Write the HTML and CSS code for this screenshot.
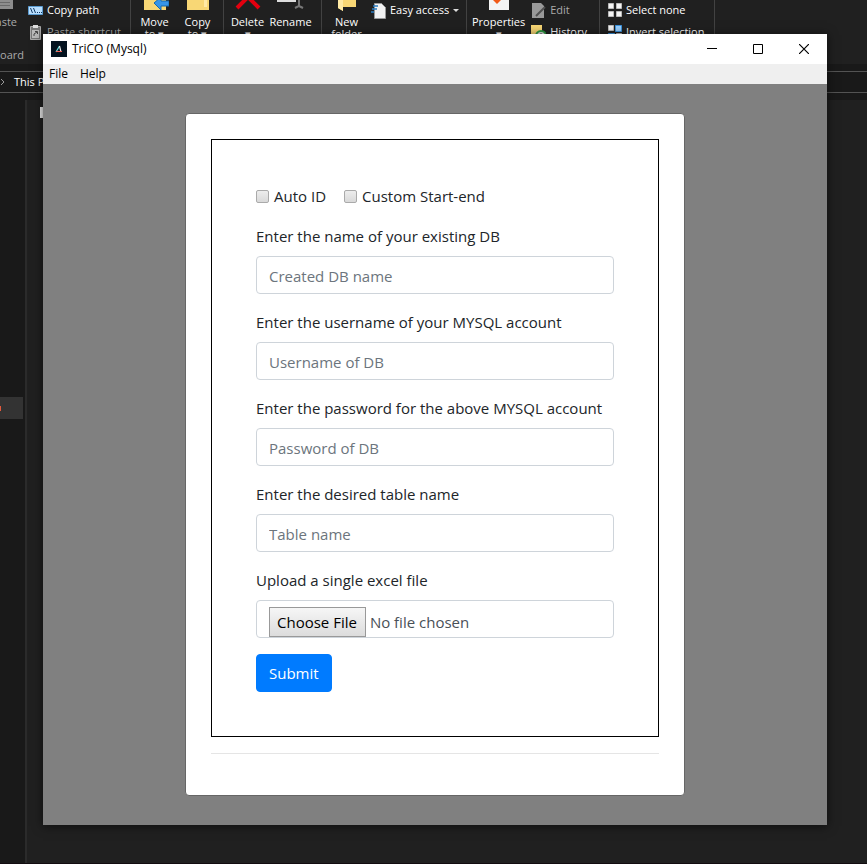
FILE: index.html
```html
<!DOCTYPE html>
<html lang="en">
<head>
<meta charset="utf-8">
<meta name="viewport" content="width=device-width, initial-scale=1">
<title>TriCO (Mysql)</title>
<link rel="stylesheet" href="styles.css">
</head>
<body>
<div class="desktop">
  <div class="explorer">
    <div class="ribbon">
      <div class="group group-clipboard">
        <div class="paste">
          <svg width="24" height="12" viewBox="0 0 24 12"><path fill="#8d8d8d" d="M0 0h20v9H0z"/><path stroke="#696969" d="M0 2.5h17M0 5.5h17"/></svg>
          <span>Paste</span>
          <span class="group-name">Clipboard</span>
        </div>
        <div class="stack">
          <div class="row"><svg width="15" height="15" viewBox="0 0 15 15"><path fill="#b9dfff" stroke="#5a9bd0" d="M.5 3.500h14v8H.5z"/><path stroke="#123a63" d="M2.500 5l2 5M5.500 5l2 5" fill="none"/><path fill="#123a63" d="M9 9h1v1H9zM11 9h1v1h-1zM13 9h1v1h-1z"/></svg>Copy path</div>
          <div class="row dim"><svg width="15" height="15" viewBox="0 0 15 15"><path fill="#777" stroke="#aaa" d="M2.500 1.500h10v13h-10z"/><path fill="#ddd" d="M5 0h5v3H5z"/><path fill="#bbb" d="M4 5h7v8H4z"/><path stroke="#444" fill="none" d="M6 11V9l3-2M7 6.500h2.500V9"/></svg>Paste shortcut</div>
        </div>
      </div>
      <div class="group group-move">
        <div class="tool"><svg width="28" height="12" viewBox="0 0 28 12"><path fill="#f8d775" d="M3 0h22v10H3z"/><path fill="#3795e8" stroke="#1768ad" d="M13 3l7-6v4h8v5h-8v4z"/></svg><span>Move</span><span>to ▾</span></div>
        <div class="tool"><svg width="28" height="12" viewBox="0 0 28 12"><path fill="#f8d775" d="M3 0h22v10H3z"/><path fill="#ffe9a6" d="M20 0h3v7h-3z"/></svg><span>Copy</span><span>to ▾</span></div>
      </div>
      <div class="group group-delete">
        <div class="tool"><svg width="28" height="12" viewBox="0 0 28 12"><path d="M3 8L14-3 25 8M14-3L3-14" fill="none" stroke="#e3000f" stroke-width="4"/></svg><span>Delete</span><span>▾</span></div>
        <div class="tool"><svg width="36" height="12" viewBox="0 0 36 12"><path fill="#ddd" d="M4 0h19v2H4z"/><path d="M26 0v6l-4 2M26 6l4 2" fill="none" stroke="#777" stroke-width="2"/></svg><span>Rename</span></div>
      </div>
      <div class="group group-new">
        <div class="tool"><svg width="28" height="12" viewBox="0 0 28 12"><path fill="#f8d775" d="M5 0h18v7H10l0 4-5-3z"/><path fill="#ffeaa5" d="M5 0h5v11L5 8z"/></svg><span>New</span><span>folder</span></div>
        <div class="stack">
          <div class="row"><svg width="15" height="17" viewBox="0 0 15 17"><path fill="#f2f2f2" stroke="#999" d="M3.500 1.500h7l4 4v11h-11z"/><path fill="none" stroke="#287cc1" stroke-width="1.500" d="M2 4h5M1 7h5M0 10h3"/></svg>Easy access<i class="caret"></i></div>
        </div>
      </div>
      <div class="group group-open">
        <div class="tool"><svg width="28" height="12" viewBox="0 0 28 12"><path fill="#f4f4f4" d="M4 0h20v10H4z"/><path fill="#f25a18" d="M8 0h8l-4 4z"/></svg><span>Properties</span><span>▾</span></div>
        <div class="stack">
          <div class="row dim"><svg width="15" height="17" viewBox="0 0 15 17"><path fill="#999" d="M1 1h9l3 3v12H1z"/><path stroke="#505050" stroke-width="2" d="M5 14L14 5"/></svg>Edit</div>
          <div class="row"><svg width="15" height="17" viewBox="0 0 15 17"><path fill="#f8d775" d="M0 1h11v14H0z"/><circle cx="10" cy="12" r="5" fill="#ddd" stroke="#2c9b42" stroke-width="2"/><path fill="none" stroke="#555" d="M10 9v3h3"/></svg>History</div>
        </div>
      </div>
      <div class="group group-select">
        <div class="stack">
          <div class="row"><svg width="14" height="14" viewBox="0 0 14 14"><path fill="#f4f4f4" stroke="#bbb" d="M.5.5h5v5h-5zM8.500.5h5v5h-5zM.5 8.500h5v5h-5zM8.500 8.500h5v5h-5z"/></svg>Select none</div>
          <div class="row"><svg width="14" height="14" viewBox="0 0 14 14"><path fill="#f4f4f4" stroke="#bbb" d="M.5.5h5v5h-5zM8.500 8.500h5v5h-5z"/><path fill="#9bd0ff" stroke="#3a93de" d="M7.500.5h6v6h-6zM.5 8.500h6v5h-6z"/></svg>Invert selection</div>
        </div>
      </div>
    </div>
    <div class="address"><svg width="6" height="10" viewBox="0 0 6 10"><path d="M1 2l3 3-3 3" fill="none" stroke="#999"/></svg>This PC</div>
    <div class="panes">
      <div class="tree"><div class="tree-item"><i></i></div></div>
      <div class="files"><i class="heading-mark"></i></div>
    </div>
  </div>

  <main class="window">
    <header class="titlebar">
      <svg class="logo" width="16" height="16" viewBox="0 0 16 16"><path fill="#03121f" d="M0 0h16v16H0z"/><path d="M5 11l3.500-6" stroke="#67e1df" stroke-width="1.200"/><path d="M8.500 5L10 11" stroke="#f1f1f1" stroke-width="1.200"/><path d="M5 10.500h6" stroke="#ef6258"/></svg>
      <span class="title">TriCO (Mysql)</span>
      <button class="control" aria-label="Minimize"><svg width="10" height="10" viewBox="0 0 10 10"><path d="M0 4.500h10" stroke="#000"/></svg></button>
      <button class="control" aria-label="Maximize"><svg width="10" height="10" viewBox="0 0 10 10"><path d="M.5.5h9v9h-9z" fill="none" stroke="#000"/></svg></button>
      <button class="control" aria-label="Close"><svg width="10" height="10" viewBox="0 0 10 10"><path d="M0 0l10 10M10 0L0 10" stroke="#000" stroke-width="1.200"/></svg></button>
    </header>
    <nav class="menubar"><button>File</button><button>Help</button></nav>
    <div class="client">
      <section class="card">
        <form class="form">
          <div class="checks">
            <label><input type="checkbox">Auto ID</label>
            <label><input type="checkbox">Custom Start-end</label>
          </div>
          <div class="field"><label for="db">Enter the name of your existing DB</label><input class="text" id="db" type="text" placeholder="Created DB name"></div>
          <div class="field"><label for="user">Enter the username of your MYSQL account</label><input class="text" id="user" type="text" placeholder="Username of DB"></div>
          <div class="field"><label for="pass">Enter the password for the above MYSQL account</label><input class="text" id="pass" type="password" placeholder="Password of DB"></div>
          <div class="field"><label for="table">Enter the desired table name</label><input class="text" id="table" type="text" placeholder="Table name"></div>
          <div class="field"><label for="file">Upload a single excel file</label><input class="text upload" id="file" type="file"></div>
          <button class="submit" type="submit">Submit</button>
        </form>
        <hr>
      </section>
    </div>
  </main>
</div>
</body>
</html>
```
FILE: styles.css
```css
* { box-sizing: border-box; }

body {
  margin: 0;
  background: #202020;
  font-family: "Open Sans", "Noto Sans", sans-serif;
}

button, input { font-family: inherit; }

.desktop {
  display: grid;
  grid-template-columns: minmax(0, 1fr);
  min-height: 100vh;
}

.explorer, .window { grid-area: 1 / 1; }

/* File manager behind the application window */
.explorer {
  display: flex;
  flex-direction: column;
  overflow: hidden;
  color: #fff;
  font-size: 11px;
  line-height: 14px;
  white-space: nowrap;
  border-bottom: 1px solid #120c10;
}

.ribbon {
  display: flex;
  height: 65px;
  border-bottom: 1px solid #2b2b2b;
}

.group {
  display: flex;
  flex: none;
  border-right: 1px solid #424242;
}

.group-clipboard { width: 131px; gap: 4px; }
.group-move { width: 93px; padding-left: 2px; }
.group-delete { width: 98px; padding-left: 2px; }
.group-new { width: 145px; padding-left: 3px; gap: 3px; }
.group-open { width: 133px; padding-left: 5px; gap: 6px; }
.group-select { width: 115px; padding-left: 8px; }

.paste {
  display: flex;
  flex-direction: column;
  align-items: flex-end;
  width: 24px;
  padding-right: 7px;
  gap: 3px;
  color: #aaa;
}

.group-name { margin: 16px -7px 0 0; }

.tool {
  display: flex;
  flex-direction: column;
  align-items: center;
  min-width: 43px;
  line-height: 12px;
}

.tool svg { margin-bottom: 4px; }

.stack { padding-top: 1px; }

.row {
  display: flex;
  align-items: center;
  gap: 4px;
  height: 18px;
  margin-bottom: 4px;
}

.dim { color: #aaa; }

.caret {
  border: 3px solid transparent;
  border-top-color: #ddd;
  border-bottom: 0;
}

.address {
  display: flex;
  align-items: center;
  gap: 8px;
  height: 22px;
  margin-top: 6px;
  border: solid #535353;
  border-width: 1px 0;
  background: #191919;
  box-shadow: 0 0 0 7px #191919;
}

.panes {
  display: flex;
  flex: 1;
  margin-top: 7px;
}

.tree {
  width: 27px;
  padding-top: 297px;
  border-right: 2px solid #2b2b2b;
  background: #191919;
}

.tree-item {
  display: flex;
  align-items: center;
  width: 23px;
  height: 22px;
  background: #333;
}

.tree-item i { width: 1px; height: 5px; background: #e2593c; }

.files { flex: 1; padding: 7px 13px; background: #202020; }

.heading-mark { display: block; width: 3px; height: 11px; background: #eee; }

/* Application window */
.window {
  display: flex;
  flex-direction: column;
  margin: 34px 40px 39px 43px;
  background: #808080;
  box-shadow: 0 1px 10px rgba(0, 0, 0, .6);
}

.titlebar {
  display: flex;
  align-items: center;
  height: 30px;
  padding-bottom: 1px;
  background: #fff;
}

.logo { margin: 0 5px 0 8px; }

.title { flex: 1; font-size: 12px; }

.control {
  display: grid;
  place-items: center;
  width: 46px;
  height: 28px;
  padding: 0;
  border: 0;
  background: none;
}

.menubar {
  display: flex;
  height: 20px;
  background: #efefef;
}

.menubar button {
  padding: 0 6px;
  border: 0;
  background: none;
  font-size: 12px;
  line-height: 18px;
}

.client { flex: 1; padding: 29px 16px; }

.card {
  max-width: 500px;
  margin: 0 auto;
  padding: 25px;
  border: 1px solid #666;
  border-radius: 4px;
  background: #fff;
  color: #212529;
  font-size: 15px;
  line-height: 24px;
}

.form { padding: 44px; border: 1px solid #000; }

.checks { display: flex; gap: 18px; margin-bottom: 16px; }

.checks label { display: flex; align-items: center; gap: 5px; }

.checks input {
  width: 13px;
  height: 13px;
  margin: 0;
  appearance: none;
  border: 1px solid #aaa;
  border-radius: 2px;
  background: linear-gradient(#ededed, #d9d9d9);
}

.field { margin-bottom: 16px; }

.field label { display: block; margin-bottom: 8px; }

.text {
  display: block;
  width: 100%;
  height: 38px;
  padding: 8px 12px 6px;
  border: 1px solid #ced4da;
  border-radius: 4px;
  background: #fff;
  color: #495057;
  font-size: 15px;
  line-height: 24px;
  overflow: hidden;
}

.upload { padding: 6px 12px; }

.text::placeholder { color: #6c757d; opacity: 1; }

.text::file-selector-button {
  height: 30px;
  margin: 0 4px 0 0;
  padding: 0 8px 0 7px;
  border: 1px solid #999;
  border-radius: 0;
  background: linear-gradient(#f6f6f6, #dcdcdc);
  color: #000;
  font: inherit;
}

.submit {
  display: block;
  height: 38px;
  padding: 0 12px;
  border: 1px solid #007bff;
  border-radius: 4px;
  background: #007bff;
  color: #fff;
  font-size: 15px;
  line-height: 24px;
}

hr { margin: 16px 0; border: 0; border-top: 1px solid #e5e5e5; }
```
